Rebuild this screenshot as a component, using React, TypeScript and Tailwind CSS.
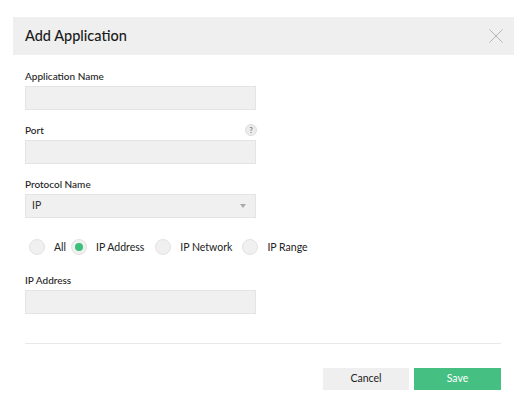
function Field({ label, children, help }: { label: string; children?: React.ReactNode; help?: boolean }) {
  return (
    <div className="w-[231px]">
      <div className="flex items-center justify-between h-[14px] mb-[3px]">
        <span className="text-[10px] font-medium text-[#222]">{label}</span>
        {help && (
          <span className="w-[12px] h-[12px] rounded-full bg-[#ececec] border border-[#ddd] text-[7px] font-bold text-[#777] flex items-center justify-center -mr-[1px]">
            ?
          </span>
        )}
      </div>
      {children ?? <div className="h-[24px] bg-[#f0f0f0] border border-[#e4e4e4]" />}
    </div>
  );
}

function Radio({ label, checked, className }: { label: string; checked?: boolean; className?: string }) {
  return (
    <div className={`flex items-center gap-[9px] ${className ?? ''}`}>
      <span className="w-[16px] h-[16px] rounded-full bg-[#f0f0f0] border border-[#e2e2e2] flex items-center justify-center">
        {checked && <span className="w-[8px] h-[8px] rounded-full bg-[#3cbf7a]" />}
      </span>
      <span className="text-[10.5px] leading-[16px] text-[#222]">{label}</span>
    </div>
  );
}

export default function App() {
  return (
    <div className="w-[528px] h-[403px] bg-white pt-[17px] overflow-hidden" style={{ fontFamily: 'Lato, "Open Sans", sans-serif' }}>
      <div className="ml-[13px] mr-[14px] h-[38px] bg-[#efefef] flex items-center justify-between pl-[12px] pr-[11px]">
        <h2 className="text-[14.5px] font-medium text-[#1a1a1a]">Add Application</h2>
        <svg width="14" height="14" viewBox="0 0 14 14" className="text-[#b5b5b5]">
          <path d="M0.5 0.5 L13.5 13.5 M13.5 0.5 L0.5 13.5" stroke="currentColor" strokeWidth="1" />
        </svg>
      </div>

      <div className="px-[25px] pt-[14px]">
        <div className="flex flex-col gap-[13px]">
          <Field label="Application Name" />
          <Field label="Port" help />
          <Field label="Protocol Name">
            <div className="h-[24px] bg-[#f0f0f0] border border-[#e4e4e4] flex items-center justify-between pl-[6px] pr-[9px]">
              <span className="text-[10.5px] text-[#333]">IP</span>
              <span className="w-0 h-0 border-l-[3px] border-r-[3px] border-t-[4px] border-l-transparent border-r-transparent border-t-[#aaa]" />
            </div>
          </Field>
        </div>

        <div className="flex items-center mt-[21px] ml-[4px]">
          <Radio label="All" className="mr-[5px]" />
          <Radio label="IP Address" checked className="mr-[11px]" />
          <Radio label="IP Network" className="mr-[10px]" />
          <Radio label="IP Range" />
        </div>

        <div className="mt-[18px]">
          <Field label="IP Address" />
        </div>

        <div className="mt-[29px] h-px bg-[#e8e8e8] w-[476px]" />

        <div className="flex justify-end gap-[5px] mt-[24px] w-[476px]">
          <button className="w-[86px] h-[22px] bg-[#efefef] text-[10.5px] text-[#222]">Cancel</button>
          <button className="w-[87px] h-[22px] bg-[#45bf82] text-[10.5px] text-white">Save</button>
        </div>
      </div>
    </div>
  );
}
